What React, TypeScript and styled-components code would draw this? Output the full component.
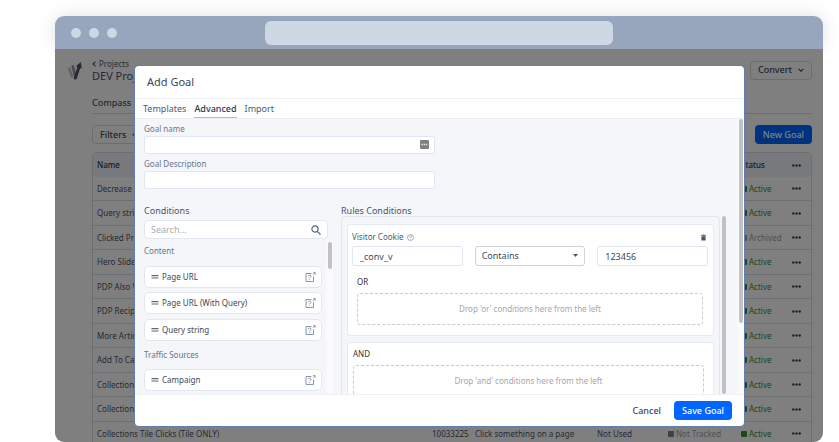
import React from 'react';
import styled, { createGlobalStyle, css } from 'styled-components';

const GlobalStyle = createGlobalStyle`
  *, *::before, *::after { box-sizing: border-box; }
  html, body { margin: 0; background: #fff; overflow: hidden; }
  body, button, input, select {
    font-family: 'Noto Sans', 'Open Sans', sans-serif;
    font-size: 8px;
    line-height: 12px;
    color: #3d4852;
  }
  button { cursor: pointer; }
`;

const Stage = styled.div`
  height: 100vh;
  padding: 16px 16px 0 55px;
`;

const Browser = styled.div`
  position: relative;
  display: flex;
  flex-direction: column;
  height: 100%;
  overflow: hidden;
  border-radius: 9px;
`;

const Shadow = styled.div`
  height: 32px;
  border-radius: 9px;
  box-shadow: 0 0 18px rgba(0, 0, 0, 0.13);
`;

const Layer = styled.div`
  display: grid;
  height: 100%;
  & > * { grid-area: 1 / 1; min-height: 0; min-width: 0; }
`;

const Chrome = styled.div`
  flex: none;
  display: grid;
  grid-template-columns: 1fr minmax(100px, 348px) 1fr;
  align-items: center;
  height: 33px;
  padding: 0 16px;
  background: #98a6bd;
`;

const Dots = styled.div`
  display: flex;
  gap: 8px;
`;

const Dot = styled.span`
  width: 10px;
  height: 10px;
  border-radius: 50%;
  background: #cdd8e5;
`;

const AddressBar = styled.div`
  height: 24px;
  border-radius: 6px;
  background: #ced8e4;
`;

const Page = styled.div`
  position: relative;
  flex: 1;
  min-height: 0;
  overflow: hidden;
  display: grid;
  grid-template-columns: 25px 1fr;
  align-items: start;
  background: #fff;
  padding: 9px 11px 0 12px;
`;

const Logo = styled.svg`
  width: 16px;
  height: 20px;
  margin-top: 3px;
`;

const Main = styled.div`
  min-width: 0;
`;

const PageHead = styled.header`
  display: flex;
  justify-content: space-between;
  align-items: center;
  height: 24px;
`;

const Crumb = styled.a`
  display: flex;
  align-items: center;
  gap: 3px;
  font-size: 8px;
  line-height: 11px;
  color: #56606e;
  text-decoration: none;
`;

const ProjectName = styled.h1`
  margin: 0;
  font-size: 11px;
  line-height: 13px;
  font-weight: 400;
  color: #4a5568;
`;

const OutlineButton = styled.button`
  display: flex;
  align-items: center;
  gap: 6px;
  height: 19px;
  padding: 0 7px;
  border: 1px solid #dadada;
  border-radius: 4px;
  background: transparent;
  font-size: 9px;
  font-weight: 500;
`;

const PageTabs = styled.nav`
  height: 32px;
  padding-top: 15px;
  border-bottom: 1px solid #dadada;
  a { font-size: 9px; font-weight: 500; color: #4a5568; text-decoration: none; }
`;

const Toolbar = styled.div`
  display: flex;
  justify-content: space-between;
  padding: 11px 0 8px;
`;

const PrimaryButton = styled.button`
  height: 19px;
  padding: 0 8px;
  border: 0;
  border-radius: 4px;
  background: #0066ff;
  color: #fff;
  font-size: 9px;
  font-weight: 500;
  white-space: nowrap;
`;

const GoalTable = styled.table`
  width: 100%;
  table-layout: fixed;
  border-spacing: 0;
  border: 1px solid #dadde2;
  border-radius: 4px 4px 0 0;
  th, td {
    height: 24px;
    padding: 0 0 0 4px;
    text-align: left;
    white-space: nowrap;
    font-size: 8px;
    line-height: 12px;
    color: #4a5568;
  }
  th { background: #f0f2f8; font-weight: 500; color: #2d3748; }
  td { border-bottom: 1px solid #dadde2; }
  tbody tr:nth-child(even) td { height: 25px; }
`;

const statusColors = { Active: '#38913a', Archived: '#98a1ae' };

const Status = styled.span<{ $color: string; $square?: string }>`
  display: flex;
  align-items: center;
  gap: 2px;
  color: ${(p) => p.$color};
  &::before {
    content: '';
    width: 6px;
    height: 6px;
    border-radius: 1px;
    background: ${(p) => p.$square || p.$color};
  }
`;

const MoreButton = styled.button`
  display: block;
  padding: 0;
  border: 0;
  background: none;
  svg { display: block; }
`;

const Scrim = styled.div`
  position: absolute;
  inset: 0;
  background: rgba(0, 0, 0, 0.5);
`;

const Modal = styled.section`
  position: absolute;
  inset: 50px 79px 16px 80px;
  display: flex;
  flex-direction: column;
  overflow: hidden;
  border-radius: 4px;
  background: #fff;
`;

const ModalEdge = styled.div`
  position: absolute;
  inset: 49px 78px 15px 79px;
  border-radius: 5px;
  background: #607fae;
`;

const ModalTitle = styled.h2`
  flex: none;
  margin: 0;
  padding: 8px 12px;
  border-bottom: 1px solid #eef0f4;
  font-size: 11px;
  line-height: 16px;
  font-weight: 400;
  color: #3d4852;
`;

const ModalTabs = styled.nav`
  flex: none;
  display: flex;
  gap: 8px;
  padding: 0 8px;
  border-bottom: 1px solid #eceef4;
`;

const ModalTab = styled.a<{ $active?: boolean }>`
  padding: 4px 0 2px;
  border-bottom: 1px solid transparent;
  font-size: 9px;
  line-height: 12px;
  color: #4d5b72;
  text-decoration: none;
  ${(p) => p.$active && css`
    color: #2d3748;
    font-weight: 500;
    border-color: #90c0ff;
  `}
`;

const ModalBody = styled.div`
  flex: 1;
  min-height: 0;
  display: grid;
  grid-template-columns: 1fr 7px;
  background: #f5f6fa;
`;

const Content = styled.div`
  display: flex;
  flex-direction: column;
  min-width: 0;
  min-height: 0;
  padding: 4px 11px 0 9px;
`;

const Field = styled.div`
  position: relative;
  display: flex;
  flex-direction: column;
  gap: 1px;
  width: 50%;
  margin-bottom: 4px;
  label { color: #67758d; line-height: 12px; }
`;

const TextInput = styled.input<{ $tall?: boolean }>`
  width: 100%;
  min-width: 0;
  height: ${(p) => (p.$tall ? 20 : 18)}px;
  padding: 0 7px;
  border: 1px solid #e1e7f2;
  border-radius: 2px;
  background: #fff;
  font-size: 9px;
  outline: none;
`;

const Badge = styled.svg`
  position: absolute;
  right: 6px;
  bottom: 5px;
`;

const Columns = styled.div`
  flex: 1;
  min-height: 0;
  display: grid;
  grid-template-columns: 189px 1fr;
  gap: 8px;
  padding-top: 12px;
`;

const Column = styled.div`
  display: flex;
  flex-direction: column;
  min-width: 0;
  min-height: 0;
`;

const ColumnTitle = styled.h3`
  flex: none;
  margin: 0;
  font-size: 9px;
  line-height: 11px;
  font-weight: 400;
  color: #4a5568;
`;

const SearchBox = styled.div`
  flex: none;
  display: flex;
  align-items: center;
  height: 19px;
  margin: 4px 5px 3px 0;
  padding: 0 6px;
  border: 1px solid #e1e7f2;
  border-radius: 4px;
  background: #fff;
  input {
    flex: 1;
    min-width: 0;
    padding: 0;
    border: 0;
    background: none;
    outline: none;
    font-size: 9px;
  }
  input::placeholder { color: #a8adb6; opacity: 1; }
`;

const Scroller = styled.div<{ $bar: number }>`
  flex: 1;
  min-height: 0;
  display: grid;
  grid-template-columns: 1fr ${(p) => p.$bar}px;
  gap: ${(p) => (p.$bar === 7 ? 4 : 2)}px;
`;

const Track = styled.div<{ $length: string; $shade?: boolean }>`
  display: flex;
  justify-content: center;
  background: ${(p) => (p.$shade ? '#fafafa' : 'transparent')};
  &::before {
    content: '';
    width: 4px;
    height: ${(p) => p.$length};
    border-radius: 2px;
    background: #c1c1c1;
  }
`;

const List = styled.div`
  overflow: hidden;
`;

const GroupName = styled.h4<{ $first?: boolean }>`
  margin: 0;
  padding: ${(p) => (p.$first ? '3px 0 9px' : '3px 0 8px')};
  font-size: 8px;
  line-height: 12px;
  font-weight: 400;
  color: #67758d;
`;

const ConditionItem = styled.div`
  display: flex;
  align-items: center;
  gap: 3px;
  height: 22px;
  margin-bottom: 5px;
  padding: 0 5px 0 6px;
  border: 1px solid #e1e7f2;
  border-radius: 5px;
  background: #fff;
  & + & { margin-top: -1px; }
  & + & + & { margin-top: 0; }
  svg:last-child { margin-left: auto; }
`;

const RulesPanel = styled.div`
  min-height: 0;
  overflow: hidden;
  padding: 7px 5px 0;
  border: 1px solid #e1e7f2;
  border-bottom: 0;
  border-radius: 4px 4px 0 0;
`;

const RuleCard = styled.div<{ $and?: boolean }>`
  display: flex;
  flex-direction: column;
  margin-bottom: 6px;
  padding: ${(p) => (p.$and ? '5px 9px 10px 5px' : '6px 5px 10px 4px')};
  border: 1px solid #e5eaf3;
  border-radius: 3px;
  background: #fff;
`;

const RuleHead = styled.div`
  display: flex;
  align-items: center;
  gap: 4px;
  color: #4d5b72;
  svg:last-child { margin-left: auto; margin-right: 2px; }
`;

const RuleInputs = styled.div`
  display: grid;
  grid-template-columns: 1fr 1fr 1fr;
  gap: 12px;
  margin-top: 3px;
`;

const SelectWrap = styled.div`
  position: relative;
  svg { position: absolute; right: 7px; top: 8px; pointer-events: none; }
`;

const Select = styled.select`
  display: block;
  appearance: none;
  width: 100%;
  height: 20px;
  padding: 0 6px;
  border: 1px solid #d4d4d6;
  border-radius: 3px;
  background: #fff;
  font-size: 9px;
  outline: none;
`;

const Joiner = styled.div<{ $indent?: boolean }>`
  margin: ${(p) => (p.$indent ? '10px 0 5px 5px' : '0 0 5px')};
  color: #2f3338;
`;

const DropZone = styled.div<{ $indent?: boolean }>`
  display: flex;
  align-items: center;
  justify-content: center;
  height: 32px;
  margin: 0 ${(p) => (p.$indent ? 5 : 0)}px;
  border: 1px dashed #c8cbcf;
  border-radius: 3px;
  color: #a5a8ad;
`;

const Footer = styled.footer`
  flex: none;
  display: flex;
  justify-content: flex-end;
  align-items: center;
  gap: 5px;
  height: 32px;
  padding: 0 12px;
  border-top: 1px solid #eef0f4;
`;

const PlainButton = styled.button`
  height: 19px;
  padding: 0 8px;
  border: 0;
  background: none;
  font-size: 9px;
  font-weight: 500;
`;

const Chevron = ({ left }: { left?: boolean }) => (
  <svg width={left ? 4 : 6} height="6" viewBox={left ? '1 0 4 6' : '0 0 6 6'} fill="none" stroke="#3d4852" strokeWidth="1.100">
    <path d={left ? 'M4.500 .7 2 3l2.500 2.300' : 'M.6 1.800 3 4.200l2.400-2.400'} />
  </svg>
);

const Handle = () => (
  <svg width="8" height="4" viewBox="0 0 8 4" stroke="#5f6977" strokeWidth="1.200">
    <path d="M.5 .6h7M.5 3h7" />
  </svg>
);

const HelpLink = () => (
  <svg width="11" height="10" viewBox="0 0 11 10" fill="none" stroke="#8496b0" strokeWidth="1">
    <path d="M6.500 1.500H1v8h7.500V4.500M8 2.800l1.800-1.800M8.200.6h2v2" />
    <path d="M3.200 4.200c0-1.500 2.900-1.400 2.900.1 0 .9-1.400.8-1.400 1.900M4.700 7.200v.9" />
  </svg>
);

const goals: [string, keyof typeof statusColors][] = [
  ['Decrease Bounce Rate', 'Active'],
  ['Query string', 'Active'],
  ['Clicked Product', 'Archived'],
  ['Hero Slider', 'Active'],
  ['PDP Also Viewed', 'Active'],
  ['PDP Recipe', 'Active'],
  ['More Articles', 'Active'],
  ['Add To Cart', 'Active'],
  ['Collections', 'Active'],
  ['Collections', 'Active'],
  ['Collections Tile Clicks (Tile ONLY)', 'Active'],
];

const Item = ({ name }: { name: string }) => (
  <ConditionItem>
    <Handle />
    <span>{name}</span>
    <HelpLink />
  </ConditionItem>
);

const More = () => (
  <MoreButton aria-label="More">
    <svg width="9" height="3" viewBox="0 0 9 3" fill="#3d4852">
      <circle cx="1.300" cy="1.500" r="1.200" /><circle cx="4.500" cy="1.500" r="1.200" /><circle cx="7.700" cy="1.500" r="1.200" />
    </svg>
  </MoreButton>
);

export default function App() {
  return (
    <>
      <GlobalStyle />
      <Stage>
        <Layer>
          <Shadow />
          <Browser>
            <Chrome>
              <Dots><Dot /><Dot /><Dot /></Dots>
              <AddressBar />
            </Chrome>
            <Page>
              <Logo viewBox="0 0 16 20" fill="none" strokeLinecap="round">
                <path d="M2.200 7.500 5 15.500" stroke="#c4c4c4" strokeWidth="2.600" />
                <path d="M5.800 5.500 8 14" stroke="#9a9a9a" strokeWidth="2.800" />
                <path d="M8.300 17 12 6" stroke="#4a5568" strokeWidth="3" />
                <path d="M8.800 5.200 14 1l.6 6.800z" fill="#4a5568" />
              </Logo>
              <Main>
                <PageHead>
                  <div>
                    <Crumb href="#projects"><Chevron left />Projects</Crumb>
                    <ProjectName>DEV Project</ProjectName>
                  </div>
                  <OutlineButton>Convert <Chevron /></OutlineButton>
                </PageHead>
                <PageTabs><a href="#compass">Compass</a></PageTabs>
                <Toolbar>
                  <OutlineButton>Filters <Chevron /></OutlineButton>
                  <PrimaryButton>New Goal</PrimaryButton>
                </Toolbar>
                <GoalTable>
                  <colgroup>
                    <col />
                    <col style={{ width: 43 }} />
                    <col style={{ width: 122 }} />
                    <col style={{ width: 71 }} />
                    <col style={{ width: 73 }} />
                    <col style={{ width: 51 }} />
                    <col style={{ width: 23 }} />
                  </colgroup>
                  <thead>
                    <tr><th>Name</th><th /><th /><th /><th /><th>Status</th><th><More /></th></tr>
                  </thead>
                  <tbody>
                    {goals.map(([name, status], i) => {
                      const last = i === goals.length - 1;
                      return (
                        <tr key={i}>
                          <td>{name}</td>
                          <td>{last && '10033225'}</td>
                          <td>{last && 'Click something on a page'}</td>
                          <td>{last && 'Not Used'}</td>
                          <td>{last && <Status $color="#98a1ae" $square="#76839a">Not Tracked</Status>}</td>
                          <td><Status $color={statusColors[status]}>{status}</Status></td>
                          <td><More /></td>
                        </tr>
                      );
                    })}
                  </tbody>
                </GoalTable>
              </Main>
              <Scrim />
            </Page>
            <ModalEdge />
            <Modal role="dialog" aria-labelledby="modal-title">
              <ModalTitle id="modal-title">Add Goal</ModalTitle>
              <ModalTabs>
                <ModalTab href="#templates">Templates</ModalTab>
                <ModalTab href="#advanced" $active>Advanced</ModalTab>
                <ModalTab href="#import">Import</ModalTab>
              </ModalTabs>
              <ModalBody>
                <Content>
                  <Field>
                    <label htmlFor="goal-name">Goal name</label>
                    <TextInput id="goal-name" />
                    <Badge width="9" height="9" viewBox="0 0 9 9">
                      <rect width="9" height="9" rx="1" fill="#808080" />
                      <path d="M1.500 4.500h6" stroke="#e8e8e8" strokeWidth="1.300" strokeDasharray="1.400 .8" />
                    </Badge>
                  </Field>
                  <Field>
                    <label htmlFor="goal-description">Goal Description</label>
                    <TextInput id="goal-description" />
                  </Field>
                  <Columns>
                    <Column>
                      <ColumnTitle>Conditions</ColumnTitle>
                      <SearchBox>
                        <input type="search" aria-label="Search conditions" placeholder="Search..." />
                        <svg width="10" height="10" viewBox="0 0 10 10" fill="none" stroke="#53657f" strokeWidth="1.200">
                          <circle cx="4" cy="4" r="3.100" /><path d="m6.300 6.300 3.200 3.200" />
                        </svg>
                      </SearchBox>
                      <Scroller $bar={7}>
                        <List>
                          <GroupName $first>Content</GroupName>
                          <Item name="Page URL" />
                          <Item name="Page URL (With Query)" />
                          <Item name="Query string" />
                          <GroupName>Traffic Sources</GroupName>
                          <Item name="Campaign" />
                          <ConditionItem />
                        </List>
                        <Track $shade $length="27px" />
                      </Scroller>
                    </Column>
                    <Column>
                      <ColumnTitle>Rules Conditions</ColumnTitle>
                      <Scroller $bar={4}>
                        <RulesPanel>
                          <RuleCard>
                            <RuleHead>
                              <span>Visitor Cookie</span>
                              <svg width="7" height="7" viewBox="0 0 7 7" fill="none" stroke="#7d8ca3" strokeWidth=".7">
                                <circle cx="3.500" cy="3.500" r="3" />
                                <path d="M2.500 2.800c0-1.300 2-1.200 2 0 0 .6-1 .6-1 1.300M3.500 4.800v.6" />
                              </svg>
                              <svg width="5" height="7" viewBox="0 0 5 7" fill="#4a5568">
                                <path d="M0 1h1.500V.4h2V1H5v.8H0zM.4 2.200h4.200v4.200H.4z" />
                              </svg>
                            </RuleHead>
                            <RuleInputs>
                              <TextInput $tall aria-label="Cookie name" defaultValue="_conv_v" />
                              <SelectWrap>
                                <Select aria-label="Match type"><option>Contains</option></Select>
                                <svg width="5" height="3" viewBox="0 0 5 3" fill="#4a5568"><path d="M0 0h5L2.500 3z" /></svg>
                              </SelectWrap>
                              <TextInput $tall aria-label="Cookie value" defaultValue="123456" />
                            </RuleInputs>
                            <Joiner $indent>OR</Joiner>
                            <DropZone $indent>Drop 'or' conditions here from the left</DropZone>
                          </RuleCard>
                          <RuleCard $and>
                            <Joiner>AND</Joiner>
                            <DropZone>Drop 'and' conditions here from the left</DropZone>
                          </RuleCard>
                        </RulesPanel>
                        <Track $length="100%" />
                      </Scroller>
                    </Column>
                  </Columns>
                </Content>
                <Track $shade $length="74%" />
              </ModalBody>
              <Footer>
                <PlainButton>Cancel</PlainButton>
                <PrimaryButton>Save Goal</PrimaryButton>
              </Footer>
            </Modal>
          </Browser>
        </Layer>
      </Stage>
    </>
  );
}
